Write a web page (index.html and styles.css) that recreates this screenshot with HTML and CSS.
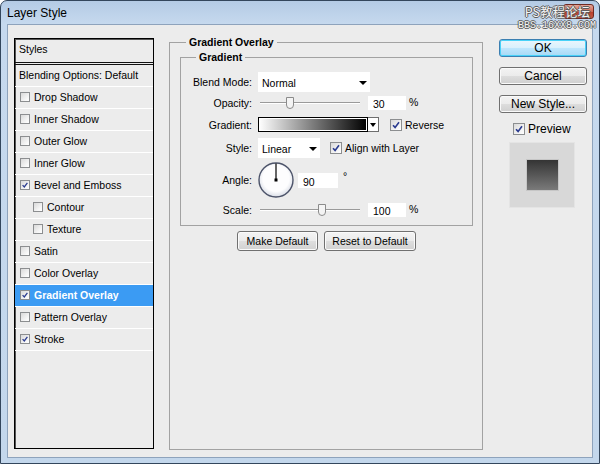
FILE: index.html
```html
<!DOCTYPE html>
<html>
<head>
<meta charset="utf-8">
<title>Layer Style</title>
<link rel="stylesheet" href="styles.css">
</head>
<body>
<div class="window">
  <div class="titlebar">
    <span class="title">Layer Style</span>
    <span class="close"></span>
    <div class="watermark"><span class="wm1">PS教程论坛</span><span class="wm2">BBS.16XX8.COM</span></div>
  </div>
  <div class="client">
    <div class="list">
      <div class="list-head">Styles</div>
      <div class="item">Blending Options: Default</div>
      <div class="item"><span class="cb"></span>Drop Shadow</div>
      <div class="item"><span class="cb"></span>Inner Shadow</div>
      <div class="item"><span class="cb"></span>Outer Glow</div>
      <div class="item"><span class="cb"></span>Inner Glow</div>
      <div class="item"><span class="cb checked"><svg viewBox="0 0 10 10"><path d="M2 5.2 L4.1 7.4 L8 2.3"/></svg></span>Bevel and Emboss</div>
      <div class="item sub"><span class="cb"></span>Contour</div>
      <div class="item sub"><span class="cb"></span>Texture</div>
      <div class="item"><span class="cb"></span>Satin</div>
      <div class="item"><span class="cb"></span>Color Overlay</div>
      <div class="item selected"><span class="cb checked"><svg viewBox="0 0 10 10"><path d="M2 5.2 L4.1 7.4 L8 2.3"/></svg></span>Gradient Overlay</div>
      <div class="item"><span class="cb"></span>Pattern Overlay</div>
      <div class="item"><span class="cb checked"><svg viewBox="0 0 10 10"><path d="M2 5.2 L4.1 7.4 L8 2.3"/></svg></span>Stroke</div>
    </div>

    <fieldset class="panel">
      <legend>Gradient Overlay</legend>
      <fieldset class="group">
        <legend>Gradient</legend>
        <div class="row r-blend">
          <span class="lbl">Blend Mode:</span>
          <div class="select sel-blend"><span>Normal</span><i class="tri"></i></div>
        </div>
        <div class="row r-opacity">
          <span class="lbl">Opacity:</span>
          <div class="slider"><div class="track"></div><svg class="thumb" style="left:28px" width="8" height="12" viewBox="0 0 8 12"><path d="M0.5 0.5 H7.5 V8 Q7.5 11.5 4 11.5 Q0.5 11.5 0.5 8 Z"/></svg></div>
          <div class="num">30</div><span class="unit">%</span>
        </div>
        <div class="row r-gradient">
          <span class="lbl">Gradient:</span>
          <div class="gradbar"></div><div class="gradbtn"><i class="tri"></i></div>
          <span class="cb big checked cb-rev"><svg viewBox="0 0 10 10"><path d="M2 5.2 L4.1 7.4 L8 2.3"/></svg></span><span class="cbtext">Reverse</span>
        </div>
        <div class="row r-style">
          <span class="lbl">Style:</span>
          <div class="select sel-style"><span>Linear</span><i class="tri"></i></div>
          <span class="cb big checked cb-align"><svg viewBox="0 0 10 10"><path d="M2 5.2 L4.1 7.4 L8 2.3"/></svg></span><span class="cbtext">Align with Layer</span>
        </div>
        <div class="row r-angle">
          <span class="lbl">Angle:</span>
          <svg class="dial" width="36" height="36" viewBox="0 0 36 36">
            <defs><radialGradient id="dg" cx="50%" cy="45%" r="55%"><stop offset="0.7" stop-color="#fdfdfe"/><stop offset="1" stop-color="#d9dde6"/></radialGradient></defs>
            <circle cx="18" cy="18" r="17" fill="url(#dg)" stroke="#4d546a" stroke-width="1.4"/>
            <line x1="18" y1="1.5" x2="18" y2="18" stroke="#000" stroke-width="1.2"/>
            <rect x="16.5" y="16.5" width="3" height="3" fill="#000"/>
          </svg>
          <div class="num num-angle">90</div><span class="deg">°</span>
        </div>
        <div class="row r-scale">
          <span class="lbl">Scale:</span>
          <div class="slider"><div class="track"></div><svg class="thumb" style="left:60px" width="8" height="12" viewBox="0 0 8 12"><path d="M0.5 0.5 H7.5 V8 Q7.5 11.5 4 11.5 Q0.5 11.5 0.5 8 Z"/></svg></div>
          <div class="num">100</div><span class="unit">%</span>
        </div>
      </fieldset>
      <div class="defaults">
        <button class="pbtn w-make">Make Default</button>
        <button class="pbtn w-reset">Reset to Default</button>
      </div>
    </fieldset>

    <div class="side">
      <button class="btn default">OK</button>
      <button class="btn">Cancel</button>
      <button class="btn">New Style...</button>
      <div class="preview-row"><span class="cb big checked"><svg viewBox="0 0 10 10"><path d="M2 5.2 L4.1 7.4 L8 2.3"/></svg></span><span class="pv-text">Preview</span></div>
      <div class="preview-box"><div class="swatch"></div></div>
    </div>
  </div>
</div>
</body>
</html>
```

FILE: styles.css
```css
html, body {
  margin: 0;
  padding: 0;
}
body {
  width: 600px;
  height: 464px;
  overflow: hidden;
  background: #ffffff;
  font-family: "Liberation Sans", Arial, sans-serif;
  font-size: 10.5px;
  color: #000;
}

.window {
  box-sizing: border-box;
  width: 600px;
  height: 464px;
  border: 1px solid #33465c;
  border-radius: 7px 7px 0 0;
  background: linear-gradient(#b4cbe5, #c6d9ee 23px, #c3d7ec);
  padding: 0 6px 5px;
  display: flex;
  flex-direction: column;
  position: relative;
}

.titlebar {
  height: 23px;
  display: flex;
  align-items: center;
  flex: none;
}
.title {
  font-size: 12px;
  color: #000;
}
.close {
  position: absolute;
  top: 3px;
  right: 5px;
  width: 31px;
  height: 15px;
  border-radius: 3px;
  border: 1px solid #6e2a22;
  box-sizing: border-box;
  background: linear-gradient(#e6a497, #d06a58 50%, #b63c2a 51%, #c75a45);
}
.watermark {
  position: absolute;
  top: 3px;
  right: 3px;
  display: flex;
  flex-direction: column;
  align-items: flex-end;
  color: #f4f4f4;
  text-shadow: 1px 0 0 #5d5d5d, -1px 0 0 #5d5d5d, 0 1px 0 #5d5d5d, 0 -1px 0 #5d5d5d;
}
.wm1 {
  display: block;
  font-family: "Noto Sans CJK SC", sans-serif;
  font-size: 12.5px;
  line-height: 15px;
  margin-right: 6px;
}
.wm2 {
  display: block;
  margin-top: 1px;
  font-family: "Liberation Mono", monospace;
  font-size: 10px;
  line-height: 11px;
}

.client {
  flex: 1;
  background: #ececec;
  border: 1px solid #8ea3bc;
  display: flex;
  align-items: flex-start;
}

/* left list */
.list {
  margin: 13px 0 0 6px;
  width: 140px;
  height: 411px;
  box-sizing: border-box;
  border: 1px solid #000;
  box-shadow: inset 1px 1px 0 #555;
  flex: none;
}
.list-head {
  height: 23px;
  line-height: 21px;
  padding-left: 4px;
  border-bottom: 3px double #111;
}
.item {
  box-sizing: border-box;
  height: 22px;
  padding-bottom: 2px;
  border-bottom: 1px solid #fff;
  display: flex;
  align-items: center;
  padding-left: 4px;
  white-space: nowrap;
}
.item .cb {
  margin-left: 1px;
  margin-right: 4px;
}
.item.sub {
  padding-left: 17px;
}
.item.selected {
  background: #3b9bf3;
  color: #fff;
  font-weight: bold;
}

/* checkboxes */
.cb {
  box-sizing: border-box;
  width: 10px;
  height: 10px;
  border: 1px solid #8c8e90;
  background: linear-gradient(135deg, #d9d9d9, #f6f6f6 70%, #ffffff);
  display: inline-flex;
  flex: none;
}
.cb svg {
  width: 100%;
  height: 100%;
}
.cb path {
  fill: none;
  stroke: #2a3b8f;
  stroke-width: 1.6;
}
.cb.big {
  width: 12px;
  height: 12px;
}

/* main panel */
fieldset {
  margin: 0;
  min-width: 0;
}
legend {
  font-weight: bold;
  line-height: 12px;
  padding: 0 3px;
}
.panel {
  margin: 11px 0 0 15px;
  width: 314px;
  height: 414px;
  box-sizing: border-box;
  border: 1px solid #a2a2a2;
  padding: 3px 9px 0 10px;
  flex: none;
}
.panel > legend {
  margin-left: 6px;
}
.group {
  border: 1px solid #a2a2a2;
  padding: 9px 0 8px 0;
}
.group > legend {
  margin-left: 15px;
}

.row {
  display: flex;
  align-items: center;
}
.lbl {
  width: 71px;
  margin-right: 6px;
  text-align: right;
  flex: none;
}
.r-blend { height: 20px; }
.r-opacity { height: 14px; margin-top: 4px; }
.r-gradient { height: 15px; margin-top: 7px; }
.r-style { height: 20px; margin-top: 6px; }
.r-angle { height: 36px; margin-top: 4px; }
.r-scale { height: 14px; margin-top: 5px; }

.select {
  box-sizing: border-box;
  height: 20px;
  background: #fff;
  display: flex;
  align-items: center;
  justify-content: space-between;
  padding: 2px 3px 0 4px;
}
.sel-blend { width: 112px; }
.sel-style { width: 62px; }
.tri {
  display: block;
  width: 0;
  height: 0;
  border-left: 4px solid transparent;
  border-right: 4px solid transparent;
  border-top: 4px solid #000;
}

.slider {
  position: relative;
  width: 102px;
  height: 14px;
  flex: none;
}
.track {
  margin: 6px 0 0 2px;
  width: 100px;
  height: 1px;
  background: #9a9a9a;
  border-bottom: 1px solid #fff;
}
.thumb {
  position: absolute;
  top: 1px;
}
.thumb path {
  fill: #f4f4f4;
  stroke: #8b8b8b;
  stroke-width: 1;
}

.num {
  box-sizing: border-box;
  margin-left: 8px;
  width: 38px;
  height: 14px;
  background: #fff;
  padding: 2px 0 0 5px;
  line-height: 12px;
}
.unit {
  margin-left: 3px;
  margin-top: -3px;
}

.gradbar {
  box-sizing: border-box;
  width: 110px;
  height: 15px;
  border: 1px solid #000;
  box-shadow: inset 0 0 0 1px #fff;
  background: linear-gradient(to right, #ffffff, #7c7c7c 50%, #000000);
}
.gradbtn {
  box-sizing: border-box;
  width: 11px;
  height: 15px;
  border: 1px solid #6e6e6e;
  border-left: none;
  background: #fff;
  display: flex;
  align-items: center;
  justify-content: center;
}
.gradbtn .tri {
  border-left-width: 3px;
  border-right-width: 3px;
}
.cb-rev { margin-left: 11px; }
.cb-align { margin-left: 10px; }
.cbtext { margin-left: 3px; }

.dial {
  display: block;
  flex: none;
}
.num-angle {
  margin-left: 4px;
  width: 40px;
  height: 15px;
  padding-top: 3px;
}
.deg {
  margin-left: 5px;
  margin-top: -8px;
}

.defaults {
  display: flex;
  justify-content: center;
  gap: 6px;
  margin-top: 5px;
}
.pbtn {
  height: 20px;
  box-sizing: border-box;
  border: 1px solid #707070;
  border-radius: 3px;
  background: linear-gradient(#f4f4f4, #ebebeb 50%, #dedede 51%, #d2d2d2);
  font-family: "Liberation Sans", Arial, sans-serif;
  font-size: 10.5px;
  color: #000;
  padding: 0;
  box-shadow: inset 0 0 0 1px #fbfbfb;
}
.w-make { width: 81px; }
.w-reset { width: 92px; }

/* right column */
.side {
  margin: 14px 0 0 16px;
  width: 88px;
  display: flex;
  flex-direction: column;
  flex: none;
}
.btn {
  height: 18px;
  box-sizing: border-box;
  border: 1px solid #707070;
  border-radius: 3px;
  background: linear-gradient(#f3f3f3, #ebebeb 50%, #dddddd 51%, #cfcfcf);
  box-shadow: inset 0 0 0 1px #fafafa;
  font-family: "Liberation Sans", Arial, sans-serif;
  font-size: 12px;
  line-height: 14px;
  color: #000;
  padding: 0;
  margin-bottom: 10px;
}
.btn.default {
  border-color: #3c7fb1;
  background: linear-gradient(#eaf6fd, #d9f0fc 50%, #bee6fd 51%, #a7d9f5);
  box-shadow: inset 0 0 0 1px #48d2f8;
}
.preview-row {
  display: flex;
  align-items: center;
  height: 12px;
  padding-left: 14px;
  margin-top: 0;
}
.pv-text {
  margin-left: 3px;
  font-size: 12px;
}
.preview-box {
  margin: 7px 0 0 10px;
  width: 66px;
  height: 66px;
  box-sizing: border-box;
  background: #d8d8d8;
  border: 1px solid #e4e4e4;
  display: flex;
  align-items: center;
  justify-content: center;
}
.swatch {
  width: 31px;
  height: 30px;
  background: linear-gradient(#343434, #7a7a7a);
  box-shadow: 0 0 0 1px #c6c6c6;
}
```
